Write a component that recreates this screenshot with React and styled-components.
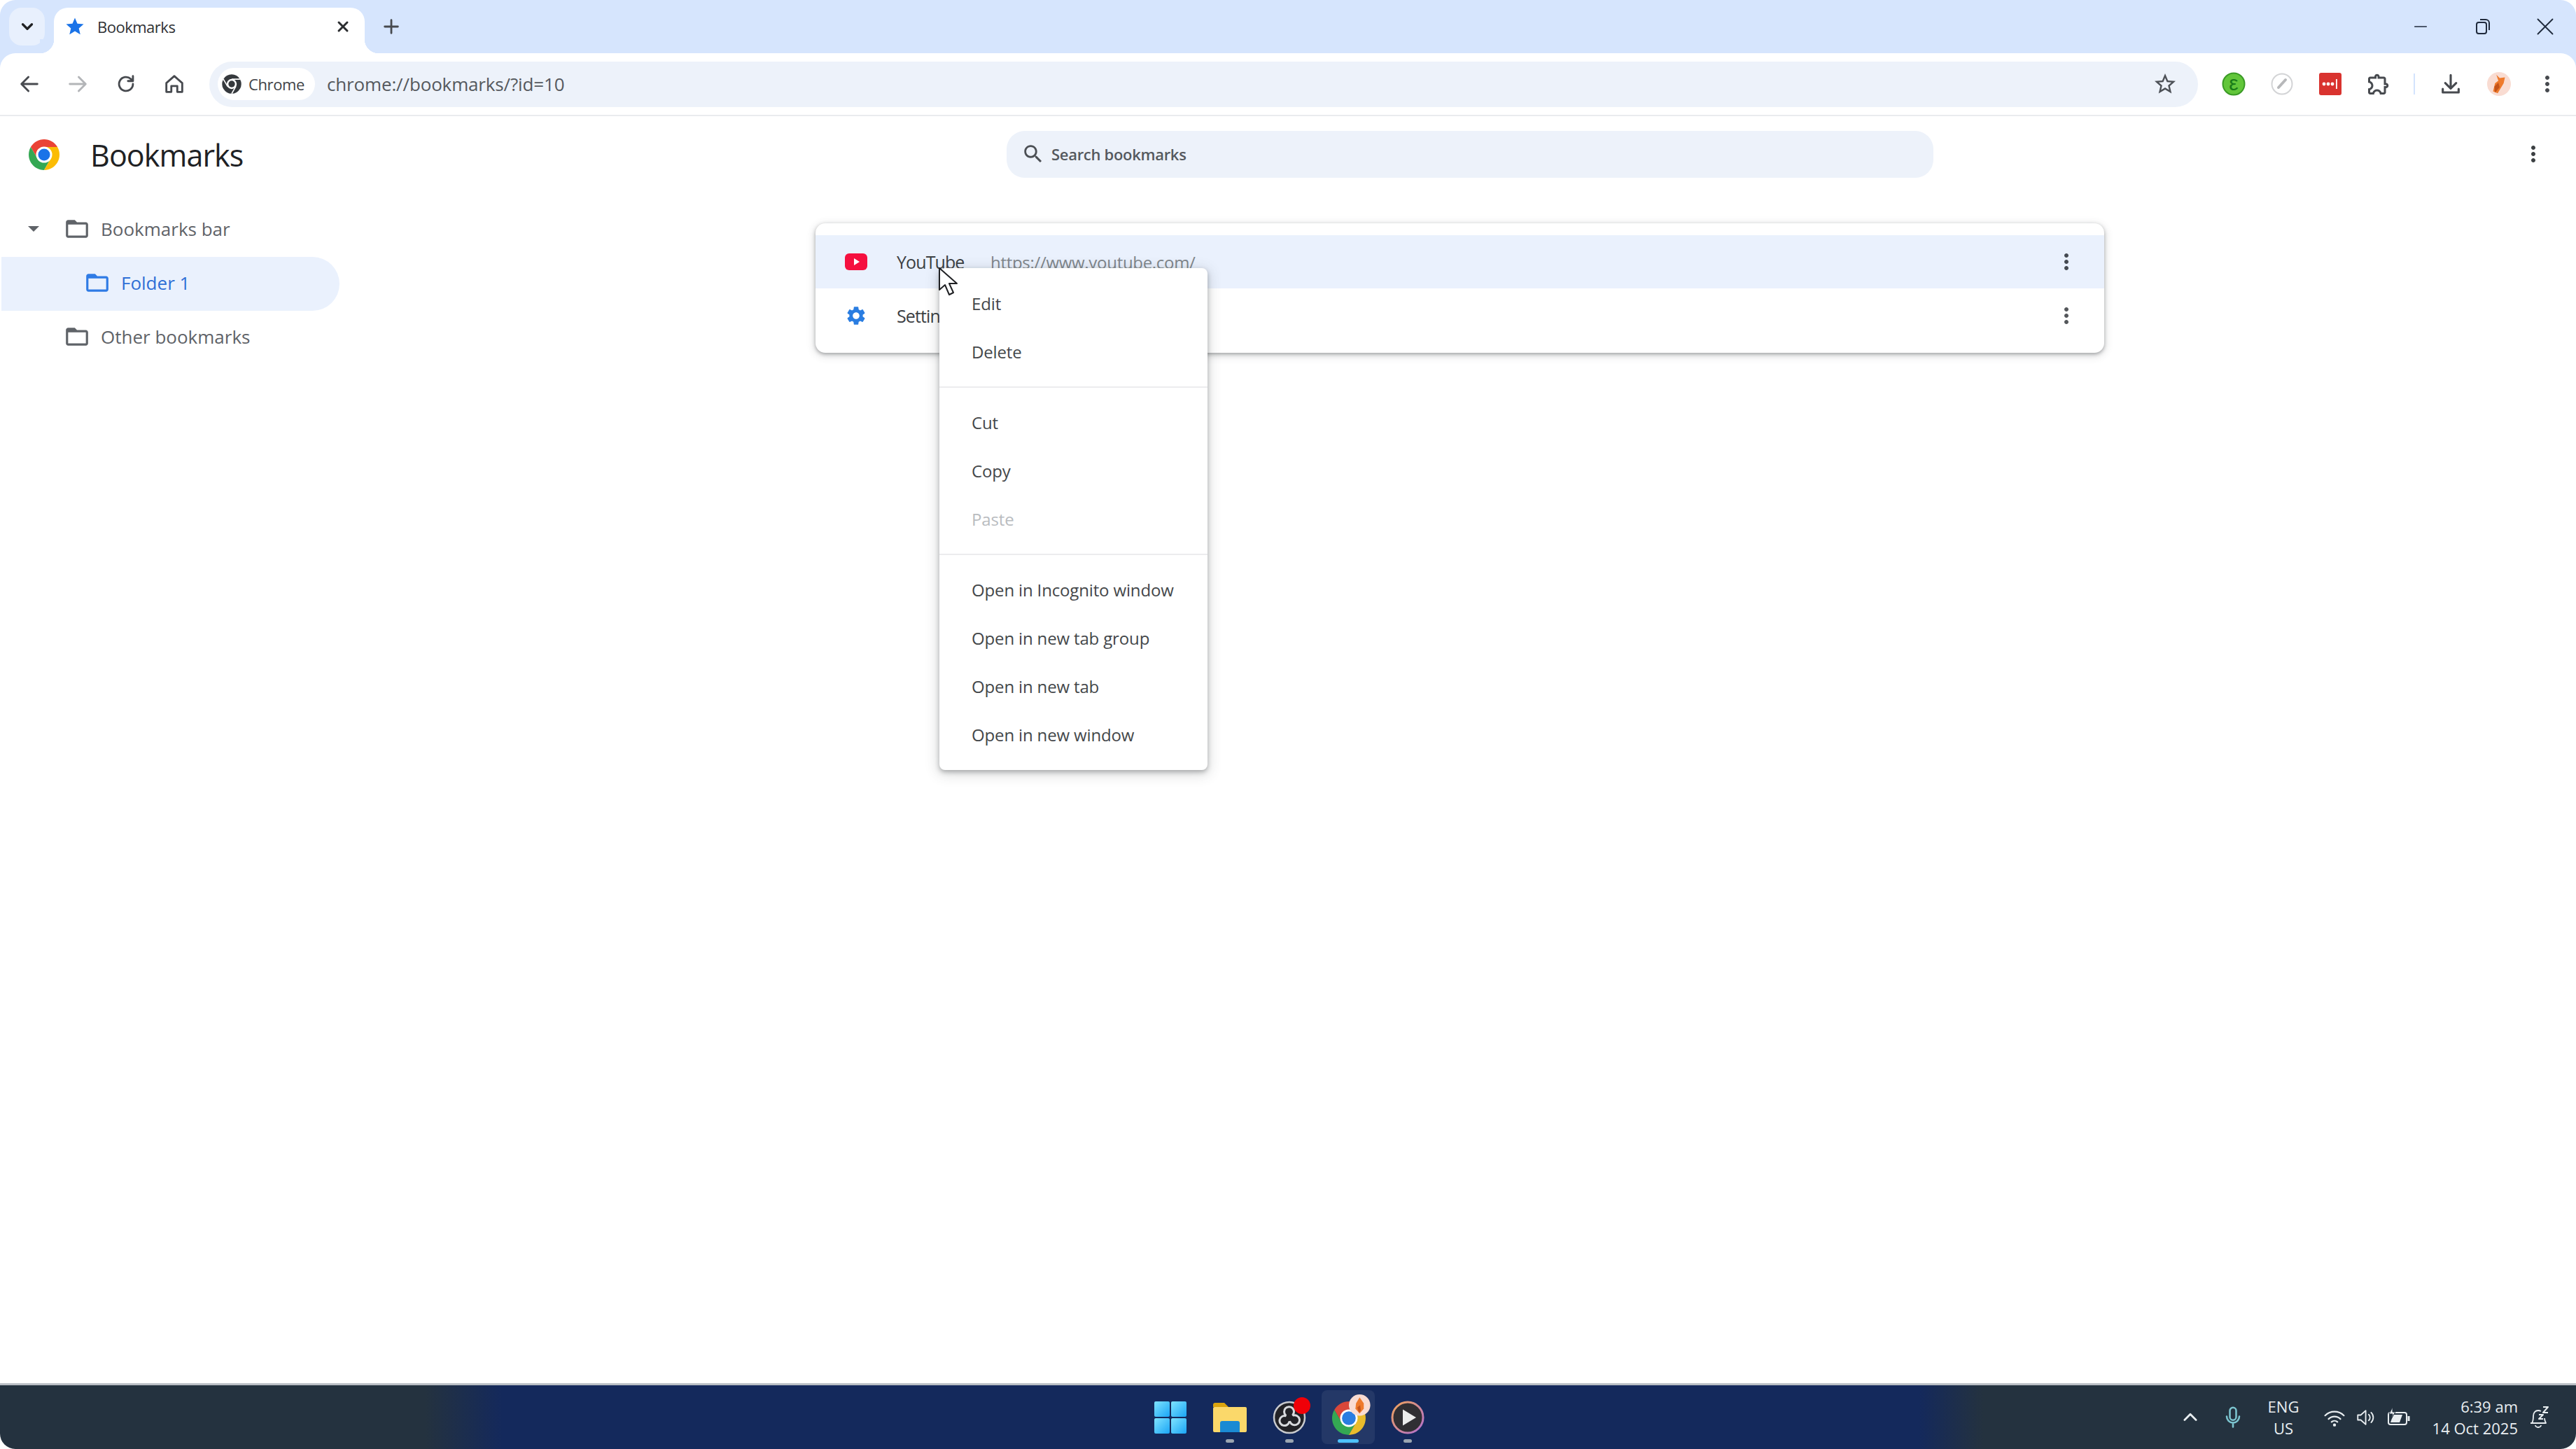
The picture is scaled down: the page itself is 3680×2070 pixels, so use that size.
import React from "react";
import styled, { createGlobalStyle } from "styled-components";

const Global = createGlobalStyle`
  html, body { margin: 0; padding: 0; background: #fff; }
  body { font-family: "Open Sans", "Noto Sans", sans-serif; }
  * { box-sizing: border-box; }
`;

const Shell = styled.div`
  position: relative;
  width: 3680px;
  height: 2070px;
  overflow: hidden;
  display: flex;
  flex-direction: column;
  background: #fff;
`;

const Frame = styled.header`
  background: #d6e5fd;
  border-radius: 22px 22px 0 0;
`;

const TabStrip = styled.div`
  height: 76px;
  display: flex;
  align-items: flex-start;
  padding: 11px 0 0 13px;
`;

const TabSearch = styled.div`
  width: 51px;
  height: 54px;
  border-radius: 18px;
  background: #e8f0fd;
  display: flex;
  align-items: center;
  justify-content: center;
`;

const Tab = styled.div`
  position: relative;
  width: 444px;
  height: 65px;
  margin-left: 13px;
  background: #fff;
  border-radius: 20px 20px 0 0;
  display: flex;
  align-items: center;
  padding: 0 19px 12px 15px;
  &::before, &::after {
    content: "";
    position: absolute;
    bottom: 0;
    width: 20px;
    height: 20px;
  }
  &::before { left: -20px; background: radial-gradient(circle at 0 0, #d6e5fd 20px, #fff 20.5px); }
  &::after { right: -20px; background: radial-gradient(circle at 100% 0, #d6e5fd 20px, #fff 20.5px); }
`;

const TabTitle = styled.span`
  flex: 1;
  margin-left: 17px;
  font-size: 22px;
  color: #2f3134;
  letter-spacing: -0.5px;
`;

const NewTab = styled.div`
  width: 38px;
  height: 54px;
  margin-left: 19px;
  display: flex;
  align-items: center;
  justify-content: center;
`;

const WindowControls = styled.div`
  margin-left: auto;
  display: flex;
  height: 54px;
  align-items: center;
`;

const WindowButton = styled.div`
  width: 89px;
  height: 54px;
  display: flex;
  align-items: center;
  justify-content: center;
`;

const Toolbar = styled.div`
  height: 90px;
  background: #fff;
  border-radius: 22px 22px 0 0;
  border-bottom: 2px solid #e9ebee;
  display: flex;
  align-items: center;
  padding: 0 7px;
`;

const ToolButton = styled.div`
  width: 69px;
  height: 69px;
  flex: none;
  display: flex;
  align-items: center;
  justify-content: center;
`;

const Omnibox = styled.div`
  flex: 1;
  height: 65px;
  margin: 0 16px;
  border-radius: 33px;
  background: #edf2fa;
  display: flex;
  align-items: center;
  padding: 0 29px 0 12px;
`;

const Chip = styled.div`
  width: 139px;
  height: 46px;
  border-radius: 23px;
  background: #fff;
  display: flex;
  align-items: center;
  padding-left: 5px;
  gap: 9px;
  font-size: 22px;
  font-weight: 500;
  color: #3f4347;
  letter-spacing: -0.4px;
`;

const Url = styled.span`
  flex: 1;
  margin-left: 17px;
  font-size: 26px;
  color: #55595e;
  letter-spacing: -0.15px;
`;

const ToolDivider = styled.div`
  width: 34px;
  flex: none;
  display: flex;
  justify-content: center;
  &::before {
    content: "";
    width: 2px;
    height: 30px;
    background: #d3e3fd;
  }
`;

const PageHeader = styled.div`
  height: 108px;
  display: grid;
  grid-template-columns: 1438px 1324px 1fr;
  align-items: center;
`;

const Brand = styled.div`
  display: flex;
  align-items: center;
  padding: 2px 0 0 39px;
  gap: 42px;
`;

const Heading = styled.h1`
  margin: 0;
  font-size: 43px;
  font-weight: 500;
  color: #202124;
  letter-spacing: -0.9px;
`;

const SearchBox = styled.div`
  height: 67px;
  border-radius: 26px;
  background: #edf2fa;
  display: flex;
  align-items: center;
  padding-left: 21px;
  gap: 9px;
  font-size: 22px;
  font-weight: 600;
  color: #55595e;
  letter-spacing: -0.3px;
`;

const PageMenu = styled.div`
  display: flex;
  justify-content: flex-end;
  padding-right: 43px;
`;

const Main = styled.main`
  flex: 1;
  display: flex;
  align-items: flex-start;
  padding-top: 16px;
`;

const Sidebar = styled.nav`
  width: 485px;
  flex: none;
`;

const TreeRow = styled.div`
  height: 77px;
  margin-left: 2px;
  display: flex;
  align-items: center;
  padding: 0 0 3px ${(p) => p.$indent}px;
  border-radius: 0 39px 39px 0;
  background: ${(p) => (p.$selected ? "#eaf1fd" : "transparent")};
  color: ${(p) => (p.$selected ? "#2f6fd6" : "#5f6368")};
  font-size: 26px;
  font-weight: 500;
`;

const Caret = styled.span`
  width: 20px;
  height: 10px;
  margin-right: 33px;
  flex: none;
  background: #5f6368;
  clip-path: polygon(0 0, 100% 0, 50% 100%);
  transform: scale(0.8);
`;

const TreeLabel = styled.span`
  margin-left: 15px;
`;

const Card = styled.section`
  width: 1841px;
  margin: 29px 0 0 680px;
  padding: 17px 0 15px;
  border-radius: 14px;
  background: #fff;
  box-shadow: 0 2px 5px rgba(60, 64, 67, 0.4), 0 3px 12px 2px rgba(60, 64, 67, 0.16);
`;

const BookmarkRow = styled.div`
  height: ${(p) => (p.$first ? 76 : 77)}px;
  display: flex;
  align-items: center;
  padding: 0 34px 0 42px;
  background: ${(p) => (p.$active ? "#eaf1fd" : "transparent")};
`;

const Favicon = styled.span`
  width: 32px;
  height: 32px;
  flex: none;
  display: flex;
  align-items: center;
  justify-content: center;
`;

const BookmarkTitle = styled.span`
  width: 134px;
  margin-left: 42px;
  flex: none;
  font-size: 25px;
  color: #3c4043;
  letter-spacing: -0.9px;
`;

const BookmarkUrl = styled.span`
  flex: 1;
  font-size: 24px;
  color: #80868b;
  letter-spacing: -0.3px;
`;

const RowMore = styled.span`
  width: 40px;
  display: flex;
  justify-content: center;
`;

const ContextMenu = styled.div`
  position: absolute;
  left: 1342px;
  top: 383px;
  width: 383px;
  padding: 16px 0;
  background: #fff;
  border-radius: 8px;
  box-shadow: 0 3px 6px rgba(60, 64, 67, 0.35), 0 4px 18px 3px rgba(60, 64, 67, 0.18);
`;

const MenuItem = styled.div`
  height: 69px;
  display: flex;
  align-items: center;
  padding-left: 46px;
  font-size: 24px;
  color: ${(p) => (p.$disabled ? "#b9bcbf" : "#44474a")};
  letter-spacing: -0.15px;
`;

const MenuDivider = styled.div`
  height: 2px;
  margin: 15px 0;
  background: #ececee;
`;

const Pointer = styled.svg`
  position: absolute;
  left: 1340px;
  top: 381px;
`;

const Taskbar = styled.footer`
  height: 94px;
  flex: none;
  border-top: 3px solid #b9bec4;
  border-radius: 0 0 22px 22px;
  background: linear-gradient(90deg, #24323f 0%, #24323f 16.5%, #14295c 19.5%, #14295c 74.5%, #24323f 77%, #24323f 100%);
  display: grid;
  grid-template-columns: 1fr auto 1fr;
  align-items: center;
`;

const TaskIcons = styled.div`
  grid-column: 2;
  display: flex;
  gap: 8.7px;
  padding-left: 3px;
`;

const TaskItem = styled.div`
  position: relative;
  width: 76px;
  height: 77px;
  border-radius: 8px;
  background: ${(p) => (p.$active ? "rgba(255,255,255,0.07)" : "transparent")};
  display: flex;
  align-items: center;
  justify-content: center;
  &::after {
    content: "";
    display: ${(p) => (p.$dot ? "block" : "none")};
    position: absolute;
    left: 50%;
    bottom: 2px;
    transform: translateX(-50%);
    width: ${(p) => (p.$active ? 30 : 12)}px;
    height: 5px;
    border-radius: 3px;
    background: ${(p) => (p.$active ? "#4cc2ff" : "#9aa5b1")};
  }
`;

const Tray = styled.div`
  grid-column: 3;
  display: flex;
  align-items: center;
  justify-content: flex-end;
  padding-right: 33px;
  color: #e9eef1;
`;

const TraySlot = styled.div`
  width: ${(p) => p.$w}px;
  margin-right: ${(p) => p.$mr || 0}px;
  flex: none;
  display: flex;
  align-items: center;
  justify-content: center;
`;

const Lang = styled.div`
  width: 70px;
  margin-right: 15px;
  flex: none;
  text-align: center;
  font-size: 22px;
  line-height: 31px;
`;

const Clock = styled.div`
  width: 140px;
  margin: 0 10px 0 7px;
  flex: none;
  text-align: right;
  font-size: 22px;
  line-height: 31px;
  letter-spacing: 0;
`;

const G = "#474a4f";

const Icon = ({ size = 32, d, fill = G }) => (
  <svg width={size} height={size} viewBox="0 0 24 24" fill={fill}>
    <path d={d} />
  </svg>
);

const Line = ({ size = 32, children, color = G, sw = 2 }) => (
  <svg width={size} height={size} viewBox="0 0 24 24" fill="none" stroke={color} strokeWidth={sw} strokeLinecap="round" strokeLinejoin="round">
    {children}
  </svg>
);

const P = {
  star: "M12 17.27L18.18 21l-1.64-7.03L22 9.24l-7.19-.61L12 2 9.19 8.63 2 9.24l5.46 4.73L5.82 21z",
  starO: "M22 9.24l-7.19-.62L12 2 9.19 8.63 2 9.24l5.46 4.73L5.82 21 12 17.27 18.18 21l-1.63-7.03L22 9.24zM12 15.4l-3.76 2.27 1-4.28-3.32-2.88 4.38-.38L12 6.1l1.71 4.04 4.38.38-3.32 2.88 1 4.28L12 15.4z",
  folder: "M20 6h-8l-2-2H4c-1.1 0-1.99.9-1.99 2L2 18c0 1.1.9 2 2 2h16c1.1 0 2-.9 2-2V8c0-1.1-.9-2-2-2zm0 12H4V8h16v10z",
  gear: "M19.14 12.94c.04-.3.06-.61.06-.94 0-.32-.02-.64-.07-.94l2.03-1.58c.18-.14.23-.41.12-.61l-1.92-3.32c-.12-.22-.37-.29-.59-.22l-2.39.96c-.5-.38-1.03-.7-1.62-.94l-.36-2.54c-.04-.24-.24-.41-.48-.41h-3.84c-.24 0-.43.17-.47.41l-.36 2.54c-.59.24-1.13.57-1.62.94l-2.39-.96c-.22-.08-.47 0-.59.22L2.74 8.87c-.12.21-.08.47.12.61l2.03 1.58c-.05.3-.09.63-.09.94s.02.64.07.94l-2.03 1.58c-.18.14-.23.41-.12.61l1.92 3.32c.12.22.37.29.59.22l2.39-.96c.5.38 1.03.7 1.62.94l.36 2.54c.05.24.24.41.48.41h3.84c.24 0 .44-.17.47-.41l.36-2.54c.59-.24 1.13-.56 1.62-.94l2.39.96c.22.08.47 0 .59-.22l1.92-3.32c.12-.22.07-.47-.12-.61l-2.01-1.58zM12 15.6c-1.98 0-3.6-1.62-3.6-3.6s1.62-3.6 3.6-3.6 3.6 1.62 3.6 3.6-1.62 3.6-3.6 3.6z",
  search: "M15.5 14h-.79l-.28-.27C15.41 12.59 16 11.11 16 9.5 16 5.91 13.09 3 9.5 3S3 5.91 3 9.5 5.91 16 9.5 16c1.61 0 3.09-.59 4.23-1.57l.27.28v.79l5 4.99L20.49 19l-4.99-5zm-6 0C7.01 14 5 11.99 5 9.5S7.01 5 9.5 5 14 7.01 14 9.5 11.99 14 9.5 14z",
  puzzle: "M10.5 4.5c.28 0 .5.22.5.5v2h6v6h2c.28 0 .5.22.5.5s-.22.5-.5.5h-2v6h-2.12c-.68-1.75-2.39-3-4.38-3s-3.7 1.25-4.38 3H4v-2.12c1.75-.68 3-2.39 3-4.38 0-1.99-1.24-3.7-2.99-4.38L4 7h6V5c0-.28.22-.5.5-.5m0-2C9.12 2.5 8 3.62 8 5H4c-1.1 0-1.99.9-1.99 2v3.8h.29c1.49 0 2.7 1.21 2.7 2.7s-1.21 2.7-2.7 2.7H2V20c0 1.1.9 2 2 2h3.8v-.3c0-1.49 1.21-2.7 2.7-2.7s2.7 1.21 2.7 2.7v.3H17c1.1 0 2-.9 2-2v-4c1.38 0 2.5-1.12 2.5-2.5S20.38 11 19 11V7c0-1.1-.9-2-2-2h-4c0-1.38-1.12-2.5-2.5-2.5z",
  more: "M12 8c1.1 0 2-.9 2-2s-.9-2-2-2-2 .9-2 2 .9 2 2 2zm0 2c-1.1 0-2 .9-2 2s.9 2 2 2 2-.9 2-2-.9-2-2-2zm0 6c-1.1 0-2 .9-2 2s.9 2 2 2 2-.9 2-2-.9-2-2-2z",
};

const ChromeLogo = ({ size, mono }) => (
  <svg width={size} height={size} viewBox="0 0 48 48">
    <path d="M43.05 13A22 22 0 0 0 4.95 13L14.5 29.5 24 13Z" fill={mono ? "#35393d" : "#ea4335"} />
    <path d="M4.95 13A22 22 0 0 0 24 46L33.5 29.5H14.5Z" fill={mono ? "#35393d" : "#34a853"} />
    <path d="M24 46A22 22 0 0 0 43.05 13H24L33.5 29.5Z" fill={mono ? "#35393d" : "#fbbc04"} />
    {mono && <path d="M24 13H43M14.5 29.500L5 13M33.500 29.500L24 46" stroke="#fff" strokeWidth="2.500" />}
    <circle cx="24" cy="24" r="11.5" fill="#fff" />
    <circle cx="24" cy="24" r={mono ? 7.5 : 8.5} fill={mono ? "#35393d" : "#1a73e8"} />
  </svg>
);

const Fox = ({ size }) => (
  <svg width={size} height={size} viewBox="0 0 36 36">
    <circle cx="18" cy="18" r="18" fill="#f9dcd2" />
    <path d="M14 4l5 5 8-1-2 9-9 15-7-3 3-12 5-4z" fill="#ee7a2c" />
    <path d="M11 22l6-6 2 7-7 8z" fill="#c4531a" />
  </svg>
);

const WinLogo = () => (
  <svg width="46" height="46" viewBox="0 0 46 46">
    <defs>
      <linearGradient id="wl" x1="0" y1="0" x2="1" y2="1">
        <stop offset="0" stopColor="#7fe3ff" />
        <stop offset="1" stopColor="#1aa5f5" />
      </linearGradient>
    </defs>
    <rect x="0" y="0" width="22" height="22" rx="2" fill="url(#wl)" />
    <rect x="24" y="0" width="22" height="22" rx="2" fill="url(#wl)" />
    <rect x="0" y="24" width="22" height="22" rx="2" fill="url(#wl)" />
    <rect x="24" y="24" width="22" height="22" rx="2" fill="url(#wl)" />
  </svg>
);

const FolderApp = () => (
  <svg width="48" height="44" viewBox="0 0 48 44">
    <path d="M0 4a3 3 0 0 1 3-3h13l6 6h-22z" fill="#dba40e" />
    <rect x="0" y="7" width="48" height="36" rx="2" fill="#fbd86a" />
    <path d="M10 43V30a3 3 0 0 1 3-3h22a3 3 0 0 1 3 3v13z" fill="#1a8ad4" />
  </svg>
);

const Blade = ({ angle }) => (
  <g transform={`rotate(${angle} 33 33)`}>
    <path d="M27.500 29.500A7 7 0 1 1 38 29" fill="none" stroke="#d8dadd" strokeWidth="3" strokeLinecap="round" />
  </g>
);

const Obs = () => (
  <svg width="66" height="66" viewBox="0 0 66 66">
    <circle cx="33" cy="33" r="22" fill="#222226" stroke="#c8cace" strokeWidth="2.500" />
    <Blade angle={0} />
    <Blade angle={120} />
    <Blade angle={240} />
    <circle cx="51" cy="16" r="12" fill="#f00008" />
  </svg>
);

const ChromeTask = () => (
  <svg width="70" height="72" viewBox="0 0 70 72">
    <g transform="translate(9.800 10.800) scale(1.09)">
      <path d="M43.05 13A22 22 0 0 0 4.95 13L14.5 29.5 24 13Z" fill="#d9473a" />
      <path d="M4.95 13A22 22 0 0 0 24 46L33.5 29.5H14.5Z" fill="#34a853" />
      <path d="M24 46A22 22 0 0 0 43.05 13H24L33.5 29.5Z" fill="#e8bb2c" />
      <circle cx="24" cy="24" r="11.5" fill="#fff" />
      <circle cx="24" cy="24" r="9" fill="#2a7de1" />
    </g>
    <g transform="translate(36 3) scale(0.85)">
      <circle cx="18" cy="18" r="18" fill="#f9dcd2" />
      <path d="M18 5l7 10 0 9-7 8-7-8 1-9z" fill="#ee7a2c" />
      <path d="M14 22l5-4 1 9-3 4z" fill="#c4531a" />
    </g>
  </svg>
);

const PlayerApp = () => (
  <svg width="48" height="48" viewBox="0 0 48 48">
    <defs>
      <linearGradient id="pl" x1="0" y1="0" x2="1" y2="1">
        <stop offset="0" stopColor="#f0a35a" />
        <stop offset="1" stopColor="#b06fd0" />
      </linearGradient>
    </defs>
    <circle cx="24" cy="24" r="22" fill="#302f33" stroke="url(#pl)" strokeWidth="3" />
    <path d="M17 12.5L36 24 17 35.5z" fill="#eceded" />
  </svg>
);

const rows = [["Edit"], ["Delete"], null, ["Cut"], ["Copy"], ["Paste", true], null,
  ["Open in Incognito window"], ["Open in new tab group"], ["Open in new tab"], ["Open in new window"]];

export default function App() {
  return (
    <Shell>
      <Global />
      <Frame>
        <TabStrip>
          <TabSearch>
            <Line size={26} color="#202124" sw={3}><path d="M6 9l6 6 6-6" /></Line>
          </TabSearch>
          <Tab>
            <Icon size={30} d={P.star} fill="#1a73e8" />
            <TabTitle>Bookmarks</TabTitle>
            <Line size={24} color="#2b2d30" sw={3}><path d="M6 6l12 12M18 6L6 18" /></Line>
          </Tab>
          <NewTab>
            <Line size={28} color="#474a4f" sw={2.4}><path d="M12 4v16M4 12h16" /></Line>
          </NewTab>
          <WindowControls>
            <WindowButton>
              <Line size={22} color="#1f2a3c" sw={1.8}><path d="M3 12h18" /></Line>
            </WindowButton>
            <WindowButton>
              <svg width="22" height="24" viewBox="0 0 22 24" fill="none" stroke="#1f2a3c" strokeWidth="2">
                <rect x="2" y="6" width="14" height="16" rx="3" />
                <path d="M7 2h8a5 5 0 0 1 5 5v10" />
              </svg>
            </WindowButton>
            <WindowButton>
              <Line size={28} color="#1f2a3c" sw={1.6}><path d="M3 3l18 18M21 3L3 21" /></Line>
            </WindowButton>
          </WindowControls>
        </TabStrip>
        <Toolbar>
          <ToolButton>
            <Line size={34} color={G} sw={2}><path d="M20 12H5M11 5l-7 7 7 7" /></Line>
          </ToolButton>
          <ToolButton>
            <Line size={34} color="#b3b5b8" sw={2}><path d="M4 12h15M13 5l7 7-7 7" /></Line>
          </ToolButton>
          <ToolButton>
            <Line size={34} color={G} sw={2}><path d="M19 12a7 7 0 1 1-2.2-5.1L19 9M19 4v5h-5" /></Line>
          </ToolButton>
          <ToolButton>
            <Line size={34} color={G} sw={2}><path d="M4 11l8-7 8 7v9h-5v-6H9v6H4z" /></Line>
          </ToolButton>
          <Omnibox>
            <Chip>
              <ChromeLogo size={30} mono />
              Chrome
            </Chip>
            <Url>chrome://bookmarks/?id=10</Url>
            <Icon size={36} d={P.starO} fill="#4d5157" />
          </Omnibox>
          <ToolButton>
            <svg width="34" height="34" viewBox="0 0 34 34">
              <circle cx="17" cy="17" r="15.500" fill="#62c63a" stroke="#3a9a25" strokeWidth="2" />
              <text x="17" y="26" textAnchor="middle" fontSize="30" fontWeight="400" fontFamily="Liberation Sans, sans-serif" fill="#187a18">ε</text>
            </svg>
          </ToolButton>
          <ToolButton>
            <svg width="32" height="32" viewBox="0 0 32 32">
              <circle cx="16" cy="16" r="14.500" fill="#fff" stroke="#d3d4d6" strokeWidth="2" />
              <path d="M11 21l10-11" stroke="#b7b8ba" strokeWidth="4" strokeLinecap="round" />
            </svg>
          </ToolButton>
          <ToolButton>
            <svg width="32" height="32" viewBox="0 0 32 32">
              <rect width="32" height="32" rx="3" fill="#d9332f" />
              <circle cx="7" cy="16" r="2.400" fill="#fff" />
              <circle cx="13" cy="16" r="2.400" fill="#fff" />
              <circle cx="19" cy="16" r="2.400" fill="#fff" />
              <rect x="24" y="9" width="1.800" height="14" fill="#fff" />
            </svg>
          </ToolButton>
          <ToolButton>
            <Icon size={36} d={P.puzzle} />
          </ToolButton>
          <ToolDivider />
          <ToolButton>
            <Line size={34} color={G} sw={2.2}><path d="M12 3v13M6.500 11l5.500 5.500 5.500-5.500M4 17v3.500h16V17" /></Line>
          </ToolButton>
          <ToolButton>
            <Fox size={34} />
          </ToolButton>
          <ToolButton>
            <Icon size={36} d={P.more} />
          </ToolButton>
        </Toolbar>
      </Frame>

      <PageHeader>
        <Brand>
          <ChromeLogo size={48} />
          <Heading>Bookmarks</Heading>
        </Brand>
        <SearchBox>
          <Icon size={34} d={P.search} fill="#4b4f54" />
          Search bookmarks
        </SearchBox>
        <PageMenu>
          <Icon size={36} d={P.more} fill="#3c4043" />
        </PageMenu>
      </PageHeader>

      <Main>
        <Sidebar>
          <TreeRow $indent={36}>
            <Caret />
            <Icon size={38} d={P.folder} fill="#5f6368" />
            <TreeLabel>Bookmarks bar</TreeLabel>
          </TreeRow>
          <TreeRow $indent={118} $selected>
            <Icon size={38} d={P.folder} fill="#2f7be5" />
            <TreeLabel>Folder 1</TreeLabel>
          </TreeRow>
          <TreeRow $indent={89}>
            <Icon size={38} d={P.folder} fill="#5f6368" />
            <TreeLabel>Other bookmarks</TreeLabel>
          </TreeRow>
        </Sidebar>
        <Card>
          <BookmarkRow $first $active>
            <Favicon>
              <svg width="32" height="24" viewBox="0 0 32 24">
                <rect width="32" height="24" rx="6" fill="#f5103f" />
                <path d="M13 7l8 5-8 5z" fill="#fff" />
              </svg>
            </Favicon>
            <BookmarkTitle>YouTube</BookmarkTitle>
            <BookmarkUrl>https://www.youtube.com/</BookmarkUrl>
            <RowMore><Icon size={36} d={P.more} fill="#454a52" /></RowMore>
          </BookmarkRow>
          <BookmarkRow>
            <Favicon><Icon size={34} d={P.gear} fill="#2a7de1" /></Favicon>
            <BookmarkTitle>Settings</BookmarkTitle>
            <BookmarkUrl>chrome://settings/</BookmarkUrl>
            <RowMore><Icon size={36} d={P.more} fill="#54575b" /></RowMore>
          </BookmarkRow>
        </Card>
      </Main>

      <Taskbar>
        <TaskIcons>
          <TaskItem><WinLogo /></TaskItem>
          <TaskItem $dot><FolderApp /></TaskItem>
          <TaskItem $dot><Obs /></TaskItem>
          <TaskItem $dot $active><ChromeTask /></TaskItem>
          <TaskItem $dot><PlayerApp /></TaskItem>
        </TaskIcons>
        <Tray>
          <TraySlot $w={44} $mr={17}>
            <Line size={28} color="#e9eef1" sw={2.4}><path d="M5 15l7-7 7 7" /></Line>
          </TraySlot>
          <TraySlot $w={44} $mr={15}>
            <Line size={36} color="#7cc5d0" sw={1.7}><path d="M12 2.500a3 3 0 0 0-3 3v6a3 3 0 0 0 6 0v-6a3 3 0 0 0-3-3zM6 11a6 6 0 0 0 12 0M12 17v4" /></Line>
          </TraySlot>
          <Lang>ENG<br />US</Lang>
          <TraySlot $w={46}>
            <Line size={34} color="#e9eef1" sw={1.5}><path d="M2.500 10a13.500 13.500 0 0 1 19 0M6 13.500a8.500 8.500 0 0 1 12 0M9 16.500a4.500 4.500 0 0 1 6 0" /><circle cx="12" cy="19.500" r="0.800" fill="#e9eef1" /></Line>
          </TraySlot>
          <TraySlot $w={46}>
            <Line size={34} color="#e9eef1" sw={1.3}><path d="M3 9.500v5h3l5 4.500V5L6 9.500zM14 9a4 4 0 0 1 0 6M16.500 7a7 7 0 0 1 0 10" /></Line>
          </TraySlot>
          <TraySlot $w={46}>
            <svg width="34" height="32" viewBox="0 0 34 32" fill="none" stroke="#e9eef1" strokeWidth="2">
              <rect x="2" y="9" width="26" height="17" rx="3" />
              <path d="M31 14v7" strokeWidth="3" />
              <path d="M5 23h13l4-11H9z" fill="#e9eef1" stroke="none" />
              <path d="M8 1L3 11h5l-2 7 6-10H8z" fill="#e9eef1" stroke="#22303e" strokeWidth="1" />
            </svg>
          </TraySlot>
          <Clock>6:39 am<br />14 Oct 2025</Clock>
          <TraySlot $w={40}>
            <svg width="30" height="34" viewBox="0 0 30 34" fill="none" stroke="#e9eef1" strokeWidth="1.800" strokeLinejoin="round">
              <path d="M5 25c2-3 2-6 2-10 0-5 3-8 7-8 2 0 3 .5 4 1M23 18c0 3 1 5 2 7H3" />
              <path d="M10 28a4 3 0 0 0 8 0" />
              <path d="M21 2h7l-7 8h7M15 13h6l-6 6h6" strokeWidth="2" />
            </svg>
          </TraySlot>
        </Tray>
      </Taskbar>

      <ContextMenu>
        {rows.map((r, i) =>
          r ? <MenuItem key={i} $disabled={r[1]}>{r[0]}</MenuItem> : <MenuDivider key={i} />
        )}
      </ContextMenu>

      <Pointer width="30" height="46" viewBox="0 0 30 46">
        <path d="M2 2v31l8-7 6 14 6-3-6-13h11z" fill="#fff" stroke="#202124" strokeWidth="2" strokeLinejoin="round" />
      </Pointer>
    </Shell>
  );
}
